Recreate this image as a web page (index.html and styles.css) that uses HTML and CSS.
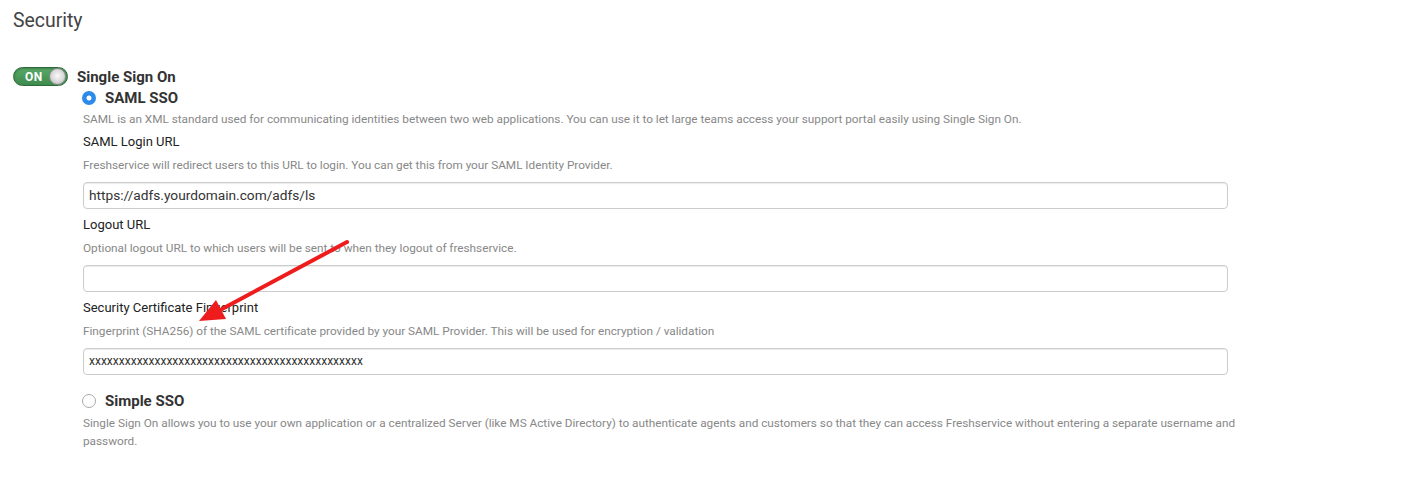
FILE: index.html
```html
<!DOCTYPE html>
<html>
<head>
<meta charset="utf-8">
<link rel="stylesheet" href="styles.css">
</head>
<body>
<div class="page">
  <h1 class="title">Security</h1>
  <div class="sso-row">
    <div class="toggle"><span class="toggle-text">ON</span><span class="knob"></span></div>
    <span class="sso-title">Single Sign On</span>
  </div>
  <div class="options">
    <div class="option">
      <div class="radio-row"><span class="radio checked"></span><span class="option-title">SAML SSO</span></div>
      <p class="desc first">SAML is an XML standard used for communicating identities between two web applications. You can use it to let large teams access your support portal easily using Single Sign On.</p>
      <div class="field">
        <div class="label">SAML Login URL</div>
        <p class="desc">Freshservice will redirect users to this URL to login. You can get this from your SAML Identity Provider.</p>
        <div class="input">https://adfs.yourdomain.com/adfs/ls</div>
      </div>
      <div class="field">
        <div class="label">Logout URL</div>
        <p class="desc">Optional logout URL to which users will be sent to when they logout of freshservice.</p>
        <div class="input"></div>
      </div>
      <div class="field">
        <div class="label">Security Certificate Fingerprint</div>
        <p class="desc">Fingerprint (SHA256) of the SAML certificate provided by your SAML Provider. This will be used for encryption / validation</p>
        <div class="input small">xxxxxxxxxxxxxxxxxxxxxxxxxxxxxxxxxxxxxxxxxxxxxx</div>
      </div>
    </div>
    <div class="option simple">
      <div class="radio-row"><span class="radio"></span><span class="option-title">Simple SSO</span></div>
      <p class="desc first wide">Single Sign On allows you to use your own application or a centralized Server (like MS Active Directory) to authenticate agents and customers so that they can access Freshservice without entering a separate username and password.</p>
    </div>
  </div>
  <svg class="arrow" width="1411" height="484" viewBox="0 0 1411 484">
    <line x1="347" y1="242" x2="222" y2="309" stroke="#ee1c1c" stroke-width="4" stroke-linecap="round"/>
    <polygon points="199,321 226,319 216,300" fill="#ee1c1c"/>
  </svg>
</div>
</body>
</html>
```

FILE: styles.css
```css
* { box-sizing: border-box; }
html, body { margin: 0; padding: 0; background: #fff; }
body { font-family: Roboto, "Noto Sans", Arial, sans-serif; color: #333; }
.page { position: relative; width: 1411px; height: 484px; padding: 9px 0 0 13px; }
.title { margin: 0; font-size: 19.4px; line-height: 24px; font-weight: 400; color: #444; }
.sso-row { display: flex; align-items: center; margin-top: 34px; height: 19px; }
.toggle {
  position: relative; width: 55px; height: 19px; border-radius: 10px;
  background: linear-gradient(#57a866, #3f8c4e);
  border: 1px solid #2e6b3a; display: flex; align-items: center;
  box-shadow: inset 0 1px 2px rgba(0,0,0,0.25);
}
.toggle-text { color: #fff; font-weight: 700; font-size: 12px; margin-left: 11px; letter-spacing: 0.4px; }
.knob {
  position: absolute; right: 1px; top: 0px; width: 17px; height: 17px; border-radius: 50%;
  background: radial-gradient(circle at 50% 45%, #fafafa 0%, #d8d8d8 55%, #a9a9a9 100%);
  border: 1px solid #8c8c8c;
}
.sso-title { margin-left: 9px; font-weight: 700; font-size: 15px; color: #333; }
.options { padding-left: 69px; margin-top: 3px; width: 1215px; }
.radio-row { display: flex; align-items: center; height: 18px; }
.radio { width: 14px; height: 14px; border-radius: 50%; border: 1px solid #aaa; background: #fff; flex: none; }
.radio.checked { border: none; background: radial-gradient(circle, #fff 0 2.2px, #2c8be8 2.8px); }
.option-title { margin-left: 9px; font-weight: 700; font-size: 15px; color: #333; }
.desc { margin: 0; font-size: 11.8px; line-height: 18px; color: #888; padding-left: 1px; letter-spacing: -0.02px; }
.desc.first { margin-top: 3px; }
.desc.wide { width: 1170px; }
.label { font-size: 13px; line-height: 18px; color: #222; margin-top: 5px; padding-left: 1px; }
.field .desc { margin-top: 5px; }
.field .input { margin-top: 8px; }
.field + .field .label { margin-top: 7px; }
.input {
  margin-left: 1px; height: 27px; border: 1px solid #ccc; border-radius: 4px;
  box-shadow: inset 0 1px 1px rgba(0,0,0,0.08);
  font-size: 13.7px; line-height: 25px; padding-left: 5px; color: #333;
}
.input.small { font-size: 12px; }
.option.simple { margin-top: 17px; }
.option.simple .desc.first { margin-top: 4px; }
.arrow { position: absolute; left: 0; top: 0; pointer-events: none; }
```
